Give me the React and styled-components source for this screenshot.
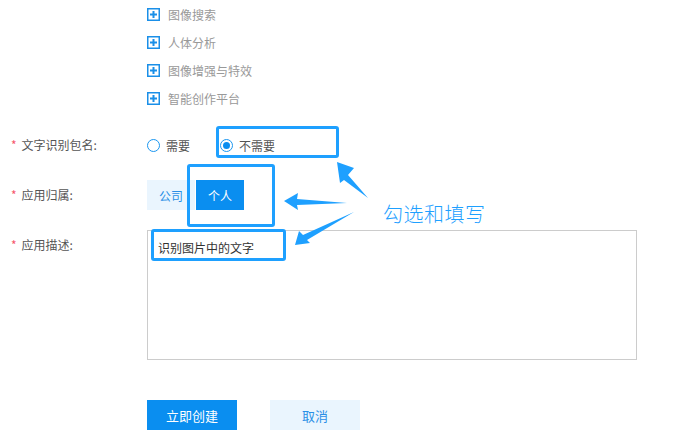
import styled, { createGlobalStyle } from 'styled-components';

const GlobalStyle = createGlobalStyle`
  html, body {
    margin: 0;
    padding: 0;
    background: #fff;
  }
  body {
    font-family: "Microsoft YaHei", "Noto Sans CJK SC", sans-serif;
  }
`;

const Page = styled.div`
  position: relative;
  width: 692px;
  height: 445px;
  overflow: hidden;
`;

const FeatureList = styled.ul`
  list-style: none;
  margin: 0 0 18px 147px;
  padding: 0;
`;

const FeatureItem = styled.li`
  display: flex;
  align-items: center;
  height: 28px;
  font-size: 12px;
  color: #999;
`;

const PlusBox = styled.span`
  display: inline-flex;
  width: 13px;
  height: 13px;
  margin-right: 8px;
  svg {
    display: block;
  }
`;

const Row = styled.div`
  display: grid;
  grid-template-columns: 136px 1fr;
  align-items: ${({ $top }) => ($top ? 'start' : 'center')};
  padding-left: 11px;
  margin-bottom: ${({ $gap }) => $gap || 20}px;
  min-height: 30px;
`;

const Label = styled.div`
  font-size: 12px;
  color: #555;
  line-height: 30px;
  &::before {
    content: '*';
    color: #f5566c;
    margin-right: 5px;
  }
`;

const RadioGroup = styled.div`
  display: flex;
  align-items: center;
  height: 30px;
`;

const RadioOption = styled.label`
  display: inline-flex;
  align-items: center;
  font-size: 12px;
  color: #555;
  margin-right: 30px;
`;

const RadioCircle = styled.span`
  width: 13px;
  height: 13px;
  border: 1px solid #1a96f0;
  border-radius: 50%;
  box-sizing: border-box;
  margin-right: 6px;
  display: inline-flex;
  align-items: center;
  justify-content: center;
  &::after {
    content: '';
    width: 7px;
    height: 7px;
    border-radius: 50%;
    background: ${({ $checked }) => ($checked ? '#0a8ef0' : 'transparent')};
  }
`;

const Segments = styled.div`
  display: flex;
  gap: 1px;
`;

const Segment = styled.div`
  width: 48px;
  height: 30px;
  display: flex;
  align-items: center;
  justify-content: center;
  font-size: 12px;
  background: ${({ $active }) => ($active ? '#0a8ef0' : '#eaf5fe')};
  color: ${({ $active }) => ($active ? '#fff' : '#2b8fe6')};
`;

const TextArea = styled.div`
  width: 490px;
  height: 130px;
  border: 1px solid #ccc;
  box-sizing: border-box;
  padding: 8px 10px;
  font-size: 12px;
  color: #333;
`;

const Actions = styled.div`
  display: flex;
  gap: 33px;
  padding-left: 147px;
`;

const Button = styled.button`
  width: 90px;
  height: 30px;
  border: none;
  font-family: inherit;
  font-size: 13px;
  background: ${({ $primary }) => ($primary ? '#0a8ef0' : '#eaf5fe')};
  color: ${({ $primary }) => ($primary ? '#fff' : '#2b8fe6')};
`;

const Highlight = styled.div`
  position: absolute;
  border: 3px solid #1ea0ff;
  border-radius: 3px;
  box-sizing: border-box;
`;

const Note = styled.div`
  position: absolute;
  left: 383px;
  top: 199px;
  font-size: 20px;
  font-weight: 300;
  color: #1ea0ff;
  letter-spacing: 0.5px;
`;

const Overlay = styled.svg`
  position: absolute;
  left: 0;
  top: 0;
  pointer-events: none;
`;

const features = ['图像搜索', '人体分析', '图像增强与特效', '智能创作平台'];

const boxes = [
  { left: 216, top: 126, width: 123, height: 32 },
  { left: 187, top: 164, width: 88, height: 63 },
  { left: 151, top: 229, width: 135, height: 32 },
];

const PlusIcon = () => (
  <svg width="13" height="13" viewBox="0 0 13 13">
    <rect x="0.75" y="0.75" width="11.5" height="11.5" fill="none" stroke="#1a8fe8" strokeWidth="1.5" />
    <path d="M6.5 3v7M3 6.5h7" stroke="#1a8fe8" strokeWidth="2" />
  </svg>
);

export default function App() {
  return (
    <>
      <GlobalStyle />
      <Page>
        <FeatureList>
          {features.map((f) => (
            <FeatureItem key={f}>
              <PlusBox>
                <PlusIcon />
              </PlusBox>
              {f}
            </FeatureItem>
          ))}
        </FeatureList>

        <Row>
          <Label>文字识别包名:</Label>
          <RadioGroup>
            <RadioOption>
              <RadioCircle />
              需要
            </RadioOption>
            <RadioOption>
              <RadioCircle $checked />
              不需要
            </RadioOption>
          </RadioGroup>
        </Row>

        <Row>
          <Label>应用归属:</Label>
          <Segments>
            <Segment>公司</Segment>
            <Segment $active>个人</Segment>
          </Segments>
        </Row>

        <Row $top $gap={40}>
          <Label>应用描述:</Label>
          <TextArea>识别图片中的文字</TextArea>
        </Row>

        <Actions>
          <Button $primary>立即创建</Button>
          <Button>取消</Button>
        </Actions>

        {boxes.map((b, i) => (
          <Highlight key={i} style={b} />
        ))}

        <Overlay width="692" height="445" viewBox="0 0 692 445">
          <g fill="#1ea0ff">
            {/* to the radio box */}
            <path d="M337 162 L354 168 L348 175 L368 198 L344 180 L340 183 Z" />
            {/* to the segments */}
            <path d="M284 201 L298 193 L297 199 L347 203 L297 205 L298 210 Z" />
            {/* to the textarea */}
            <path d="M295 245 L299 231 L303 235 L354 212 L307 240 L310 243 Z" />
          </g>
        </Overlay>

        <Note>勾选和填写</Note>
      </Page>
    </>
  );
}
